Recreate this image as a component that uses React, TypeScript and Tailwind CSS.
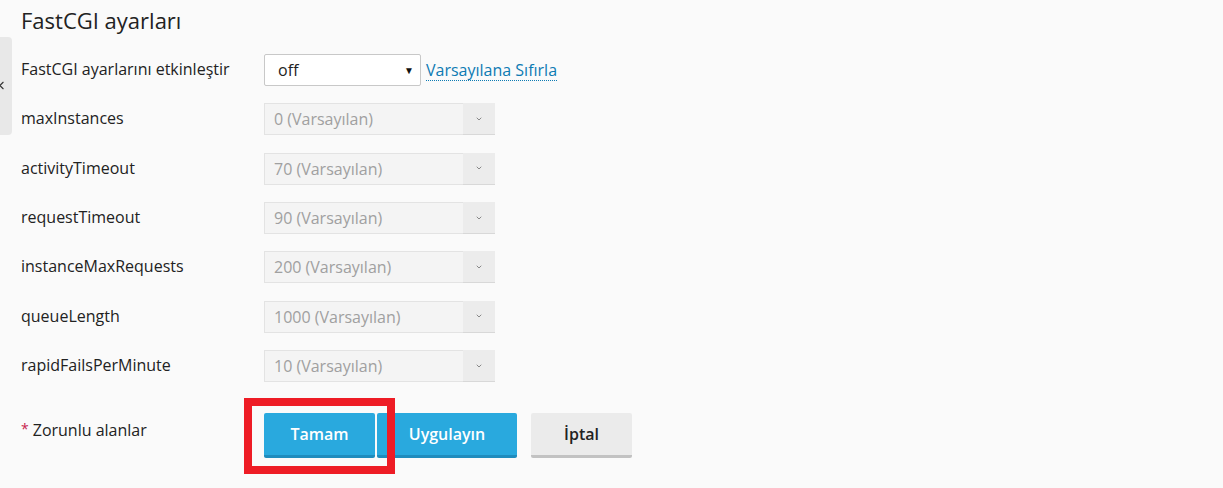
import { ChevronLeft, ChevronDown } from 'lucide-react'

const rows = [
  { name: 'maxInstances', value: '0 (Varsayılan)' },
  { name: 'activityTimeout', value: '70 (Varsayılan)' },
  { name: 'requestTimeout', value: '90 (Varsayılan)' },
  { name: 'instanceMaxRequests', value: '200 (Varsayılan)' },
  { name: 'queueLength', value: '1000 (Varsayılan)' },
  { name: 'rapidFailsPerMinute', value: '10 (Varsayılan)' },
]

function Row({ label, children }: { label: string; children: React.ReactNode }) {
  return (
    <div className="flex items-center h-[49.33px]">
      <div className="w-[243px] text-[16px] text-[#222] -mt-[2px]">{label}</div>
      {children}
    </div>
  )
}

export default function App() {
  return (
    <div
      className="relative w-[1223px] h-[488px] bg-[#fafafa] overflow-hidden"
      style={{ fontFamily: '"Open Sans", "Noto Sans", sans-serif' }}
    >
      {/* sidebar toggle */}
      <div className="absolute left-0 top-[37px] w-[12px] h-[98px] bg-[#e8e8e8] rounded-r-[4px]">
        <ChevronLeft className="absolute left-[-5px] top-[42px] w-[13px] h-[13px] text-[#333]" strokeWidth={2} />
      </div>

      <div className="pl-[21px] pt-[5px]">
        <h2 className="text-[22px] leading-[30px] text-[#222] font-normal">FastCGI ayarları</h2>

        <div className="mt-[10.5px]">
          <Row label="FastCGI ayarlarını etkinleştir">
            <div className="flex items-center">
              <div className="w-[157px] h-[32px] bg-white border border-[#c8c8c8] rounded-[2px] flex items-center justify-between pl-[13px] pr-[6px] text-[16px] text-[#222]">
                <span>off</span>
                <span className="text-[10px] text-[#111]">▼</span>
              </div>
              <a className="ml-[5px] text-[16px] text-[#0d7bb3] border-b border-dotted border-[#0d7bb3] leading-[20px]">
                Varsayılana Sıfırla
              </a>
            </div>
          </Row>

          {rows.map((r) => (
            <Row key={r.name} label={r.name}>
              <div className="flex h-[32px]">
                <div className="w-[199px] bg-[#f4f4f4] border border-[#e3e3e3] border-r-0 flex items-center pl-[9px] text-[16px] text-[#a0a0a0]">
                  {r.value}
                </div>
                <div className="w-[32px] bg-[#ececec] border-b border-[#d8d8d8] flex items-center justify-center">
                  <ChevronDown className="w-[8px] h-[8px] text-[#888]" strokeWidth={3} />
                </div>
              </div>
            </Row>
          ))}
        </div>

        <div className="flex items-start mt-[22px]">
          <div className="w-[243px] pt-[5px] text-[16px] text-[#222]">
            <span className="text-[#c7254e] text-[14px] align-top mr-[4px]">*</span>Zorunlu alanlar
          </div>
          <div className="relative flex">
            <button className="w-[111px] h-[45px] bg-[#29a9de] border-b-[3px] border-[#1f8cbd] rounded-[2px] text-white text-[16px] font-semibold">
              Tamam
            </button>
            <button className="ml-[2px] w-[140px] h-[45px] bg-[#29a9de] border-b-[3px] border-[#1f8cbd] rounded-[2px] text-white text-[16px] font-semibold">
              Uygulayın
            </button>
            <button className="ml-[14px] w-[101px] h-[45px] bg-[#ebebeb] border-b-[3px] border-[#c2c2c2] rounded-[2px] text-[#222] text-[16px] font-semibold">
              İptal
            </button>
            {/* highlight annotation */}
            <div className="absolute left-[-20px] top-[-15px] w-[151px] h-[76px] border-[8px] border-[#ee1c25] pointer-events-none" />
          </div>
        </div>
      </div>
    </div>
  )
}
